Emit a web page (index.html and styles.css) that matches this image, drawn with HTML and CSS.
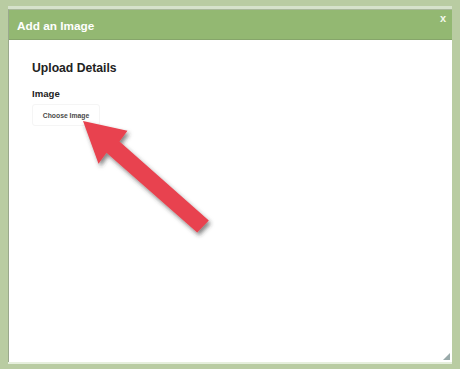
FILE: index.html
```html
<!DOCTYPE html>
<html>
<head>
<meta charset="utf-8">
<link rel="stylesheet" href="styles.css">
</head>
<body>
<div class="page">
  <div class="dialog">
    <div class="header">
      <span class="title">Add an Image</span>
      <span class="close">x</span>
    </div>
    <div class="content">
      <h2 class="section">Upload Details</h2>
      <div class="label">Image</div>
      <button class="choose">Choose Image</button>
    </div>
    <span class="grip"></span>
  </div>
  <svg class="arrow" width="460" height="369" viewBox="0 0 460 369">
    <defs>
      <filter id="sh" x="-20%" y="-20%" width="150%" height="150%">
        <feDropShadow dx="2" dy="3" stdDeviation="2" flood-color="#333" flood-opacity="0.6"/>
      </filter>
    </defs>
    <polygon filter="url(#sh)" fill="#e8434f" points="83,121 127.5,130.8 119.5,141.5 208.8,220.6 197.2,232.6 106.5,152.8 98.5,163.8"/>
  </svg>
</div>
</body>
</html>
```
FILE: styles.css
```css
html, body {
  margin: 0;
  padding: 0;
  background: #b9cca2;
  font-family: "Liberation Sans", Arial, sans-serif;
}
.page {
  position: relative;
  width: 460px;
  height: 369px;
  padding: 9px 8px 0 8px;
  box-sizing: border-box;
}
.dialog {
  position: relative;
  width: 444px;
  height: 353px;
  background: #fff;
  border-top: 1px solid #a9b89a;
  box-shadow: 0 -3px 0 #d6e2cb, 0 2px 0 #e6efdd;
  border-left: 1px solid #9aa88d;
  box-sizing: border-box;
}
.header {
  height: 29px;
  background: #93b872;
  border-bottom: 1px solid #86a56b;
  display: flex;
  align-items: center;
  justify-content: space-between;
  padding: 0 0 0 8px;
  position: relative;
}
.title {
  color: #fff;
  font-weight: bold;
  font-size: 11.8px;
  margin-top: 2px;
}
.close {
  color: #f4f8ec;
  font-weight: bold;
  font-size: 11px;
  position: absolute;
  right: 6px;
  top: 2px;
}
.content {
  padding: 21px 0 0 23px;
}
.section {
  margin: 0;
  font-size: 12.2px;
  font-weight: bold;
  color: #222;
}
.label {
  margin-top: 13px;
  font-size: 9.6px;
  font-weight: bold;
  color: #222;
}
.choose {
  margin-top: 5px;
  display: block;
  background: #fff;
  border: 1px solid #f5f5f5;
  border-radius: 3px;
  width: 68px;
  height: 22px;
  padding: 0;
  font-family: "Liberation Sans", Arial, sans-serif;
  font-size: 6.8px;
  font-weight: bold;
  color: #4a4a4a;
}
.grip {
  position: absolute;
  right: 2px;
  bottom: 2px;
  width: 0;
  height: 0;
  border-left: 7px solid transparent;
  border-bottom: 7px solid #9aa;
}
.arrow {
  position: absolute;
  left: 0;
  top: 0;
}
```
